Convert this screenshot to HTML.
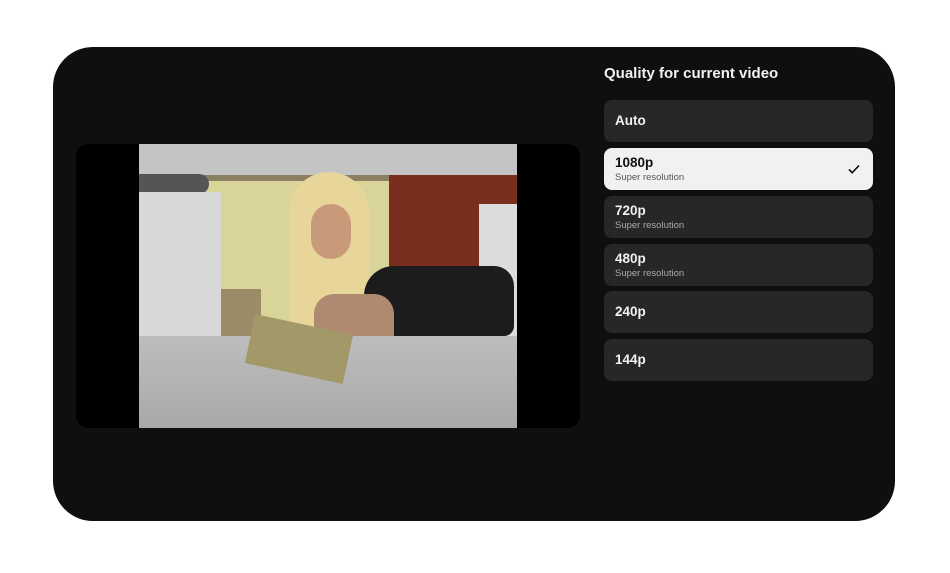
<!DOCTYPE html>
<html><head><style>
*{margin:0;padding:0;box-sizing:border-box}
body{width:950px;height:573px;background:#fff;font-family:"Liberation Sans",sans-serif;position:relative;overflow:hidden}
.panel{position:absolute;left:53px;top:47px;width:842px;height:474px;background:#0f0f0f;border-radius:40px}
.vid{position:absolute;left:76px;top:144px;width:504px;height:284px;background:#000;border-radius:12px;overflow:hidden}
.img{position:absolute;left:63px;top:0;width:378px;height:284px;background:#d9d49a;overflow:hidden}
.img div{position:absolute}
h1{position:absolute;left:604px;top:65px;color:#f1f1f1;font-size:15px;font-weight:bold}
.it{position:absolute;left:604px;width:269px;height:42px;background:#272727;border-radius:8px;color:#f1f1f1;padding-left:11px}
.it b{display:block;font-size:13.5px;font-weight:bold}
.it span{display:block;font-size:9.5px;color:#aaa;margin-top:2px}
.one{line-height:42px}
.two{padding-top:7px}
.sel{background:#f1f1f1;color:#0f0f0f}
.sel span{color:#555}
</style></head><body>
<div class="panel"></div>
<div class="vid"><div class="img">
<div style="left:0;top:0;width:378px;height:31px;background:#c4c4c4"></div>
<div style="left:0;top:31px;width:378px;height:6px;background:#8a7f60"></div>
<div style="left:250px;top:31px;width:128px;height:170px;background:#7a2f1e"></div>
<div style="left:340px;top:60px;width:38px;height:150px;background:#dcdcdc"></div>
<div style="left:0;top:30px;width:70px;height:20px;background:#555;border-radius:0 10px 10px 0"></div>
<div style="left:0;top:48px;width:82px;height:160px;background:#d8d8d8"></div>
<div style="left:82px;top:145px;width:40px;height:60px;background:#998c66"></div>
<div style="left:150px;top:28px;width:80px;height:170px;background:#e8d59a;border-radius:40px 40px 10px 10px"></div>
<div style="left:172px;top:60px;width:40px;height:55px;background:#c99a7a;border-radius:20px"></div>
<div style="left:225px;top:122px;width:150px;height:70px;background:#1c1c1c;border-radius:30px 20px 10px 10px"></div>
<div style="left:175px;top:150px;width:80px;height:70px;background:#b08a70;border-radius:20px"></div>
<div style="left:0;top:192px;width:378px;height:92px;background:linear-gradient(#bdbdbd,#a9a9a9)"></div>
<div style="left:110px;top:180px;width:100px;height:50px;background:#a39868;transform:rotate(12deg)"></div>
</div></div>
<h1>Quality for current video</h1>
<div class="it one" style="top:100px"><b>Auto</b></div>
<div class="it two sel" style="top:148px"><b>1080p</b><span>Super resolution</span>
<svg style="position:absolute;right:12px;top:14px" width="14" height="14" viewBox="0 0 14 14"><path d="M2 7.5l3.2 3.2L12 3.5" fill="none" stroke="#0f0f0f" stroke-width="1.6"/></svg></div>
<div class="it two" style="top:196px"><b>720p</b><span>Super resolution</span></div>
<div class="it two" style="top:244px"><b>480p</b><span>Super resolution</span></div>
<div class="it one" style="top:291px"><b>240p</b></div>
<div class="it one" style="top:339px"><b>144p</b></div>
</body></html>
